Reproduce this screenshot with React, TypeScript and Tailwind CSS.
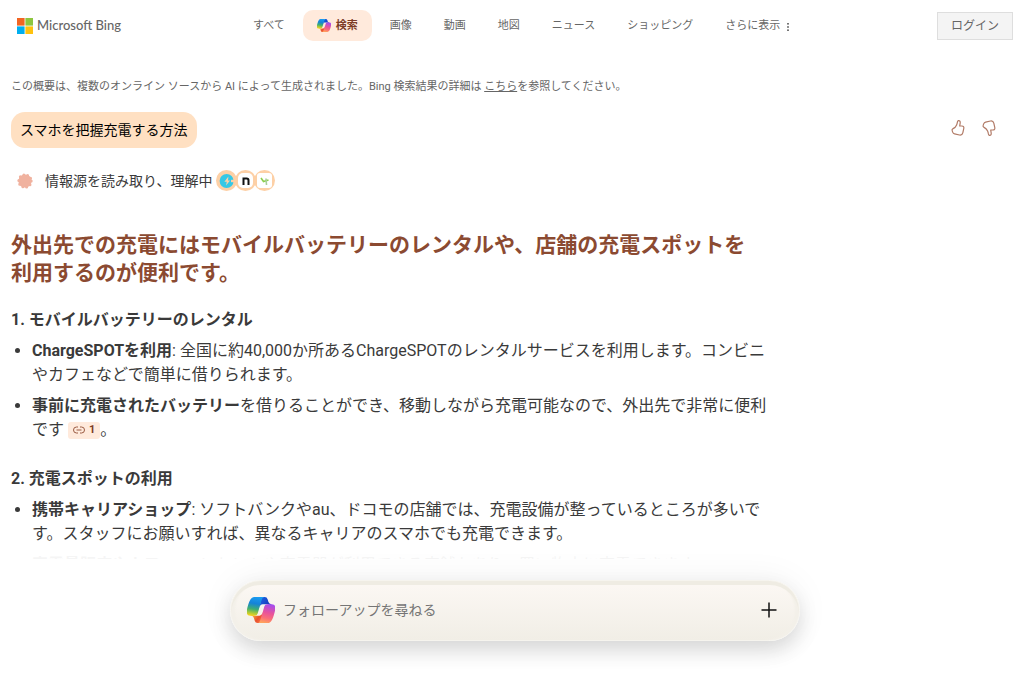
import { useId } from 'react';

const tabs = ['画像', '動画', '地図', 'ニュース', 'ショッピング'];

function MicrosoftLogo() {
    return (
        <svg viewBox="0 0 16 16" className="size-4" aria-hidden="true">
            <rect width="7.6" height="7.6" fill="#f26522" />
            <rect x="8.4" width="7.6" height="7.6" fill="#8dc63f" />
            <rect y="8.4" width="7.6" height="7.6" fill="#00aeef" />
            <rect x="8.4" y="8.4" width="7.6" height="7.6" fill="#ffc20e" />
        </svg>
    );
}

function CopilotLogo({ className }: { className: string }) {
    const id = useId();

    return (
        <svg viewBox="3 4 42 40" className={className} aria-hidden="true">
            <defs>
                <linearGradient id={`${id}a`} x1="24" y1="6" x2="38" y2="15" gradientUnits="userSpaceOnUse">
                    <stop offset="0" stopColor="#1b5fe0" />
                    <stop offset="1" stopColor="#1738b8" />
                </linearGradient>
                <linearGradient id={`${id}b`} x1="11" y1="33" x2="25" y2="44" gradientUnits="userSpaceOnUse">
                    <stop offset="0" stopColor="#f5a33b" />
                    <stop offset="0.5" stopColor="#e8502c" />
                    <stop offset="1" stopColor="#fb7a4d" />
                </linearGradient>
                <linearGradient id={`${id}c`} x1="17" y1="4" x2="12" y2="33" gradientUnits="userSpaceOnUse">
                    <stop offset="0" stopColor="#1a9cf0" />
                    <stop offset="0.35" stopColor="#1583d8" />
                    <stop offset="0.65" stopColor="#3fae72" />
                    <stop offset="0.85" stopColor="#a8c83a" />
                    <stop offset="1" stopColor="#f5d31c" />
                </linearGradient>
                <linearGradient id={`${id}d`} x1="37" y1="15" x2="30" y2="44" gradientUnits="userSpaceOnUse">
                    <stop offset="0" stopColor="#a44cf0" />
                    <stop offset="0.45" stopColor="#e8539c" />
                    <stop offset="0.75" stopColor="#fb6f78" />
                    <stop offset="1" stopColor="#ffa35c" />
                </linearGradient>
            </defs>
            <path
                fill={`url(#${id}a)`}
                d="M34.142 7.325A4.63 4.63 0 0 0 29.7 4H28.35a4.63 4.63 0 0 0-4.554 3.794L21.48 20.407l.575-1.965a4.63 4.63 0 0 1 4.444-3.33h7.853l3.294 1.282 3.175-1.283h-.926a4.63 4.63 0 0 1-4.444-3.325l-1.309-4.461Z"
            />
            <path
                fill={`url(#${id}b)`}
                d="M14.33 40.656A4.63 4.63 0 0 0 18.779 44h2.87a4.63 4.63 0 0 0 4.629-4.51l.312-12.163-.654 2.233a4.63 4.63 0 0 1-4.443 3.329h-7.919l-2.823-1.531-3.057 1.53h.912a4.63 4.63 0 0 1 4.447 3.344l1.279 4.424Z"
            />
            <path
                fill={`url(#${id}c)`}
                d="M29.5 4H13.46c-4.583 0-7.332 6.057-9.165 12.113-2.17 7.176-5.012 16.775 3.208 16.775h6.925a4.63 4.63 0 0 0 4.456-3.358 2077.6 2077.6 0 0 1 4.971-17.156c.843-2.843 1.544-5.284 2.621-6.805C27.08 4.717 28.086 4 29.5 4Z"
            />
            <path
                fill={`url(#${id}d)`}
                d="M18.498 44h16.04c4.582 0 7.332-6.058 9.165-12.115 2.17-7.177 5.013-16.775-3.207-16.775h-6.926a4.63 4.63 0 0 0-4.456 3.358 2084 2084 0 0 1-4.972 17.16c-.842 2.841-1.544 5.285-2.62 6.805-.604.852-1.61 1.567-3.024 1.567Z"
            />
        </svg>
    );
}

function ThumbIcon({ className = '' }: { className?: string }) {
    return (
        <svg
            viewBox="0 0 16 18"
            className={`h-[18px] w-4 ${className}`}
            fill="none"
            stroke="#b17a66"
            strokeWidth="1.2"
            strokeLinejoin="round"
            strokeLinecap="round"
            aria-hidden="true"
        >
            <path d="M8.4 1.6c1.3-.3 2 .9 1.8 2.3l-.5 3.1h2.3c1.3 0 2.1 1 1.8 2.3l-1 4.5c-.4 1.6-1.7 2.5-3.3 2.2l-4.9-1.1c-.9-.2-1.5-.7-1.8-1.5l-.6-1.5c-.4-1 0-1.8.9-2.3 1.9-1 2.8-2 3.5-3.7.4-1 .7-1.8.8-2.8.1-.8.4-1.3 1-1.5Z" />
        </svg>
    );
}

function Header() {
    return (
        <header className="flex items-start pt-[10px] pr-[11px] pl-[17px] text-[11px] text-[#666]">
            <a href="#" className="flex h-8 w-[236px] items-center gap-1">
                <MicrosoftLogo />
                <span className="font-['Lato',sans-serif] text-[13px] font-medium text-[#666]">
                    Microsoft Bing
                </span>
            </a>
            <nav className="flex items-center gap-[33px] whitespace-nowrap">
                <a href="#" className="pt-[2px]">
                    すべて
                </a>
                <a
                    href="#"
                    aria-current="page"
                    className="-mx-[15px] flex h-[31px] w-[69px] items-center justify-center gap-[5px] rounded-[10px] bg-[#ffeadc] font-bold text-[#7b3d27]"
                >
                    <CopilotLogo className="h-[13px] w-[14px]" />
                    <span className="pt-[2px]">検索</span>
                </a>
                {tabs.map((tab) => (
                    <a key={tab} href="#" className="-mr-px pt-[2px]">
                        {tab}
                    </a>
                ))}
                <button type="button" className="flex items-center gap-[6px] pt-[2px]">
                    さらに表示
                    <svg viewBox="0 0 4 10" className="h-2 w-1" fill="#555" aria-hidden="true">
                        <rect x="1" y="0" width="2" height="2" />
                        <rect x="1" y="4" width="2" height="2" />
                        <rect x="1" y="8" width="2" height="2" />
                    </svg>
                </button>
            </nav>
            <button
                type="button"
                className="mt-[2px] ml-auto h-7 border border-[#dedede] bg-[#f4f4f4] px-[13px] text-[12px]"
            >
                ログイン
            </button>
        </header>
    );
}

function Sources() {
    const ring =
        'flex size-[21px] items-center justify-center rounded-full bg-[#fdd0a6] -ml-[2px]';

    return (
        <div className="ml-[6px] flex" aria-hidden="true">
            <span className={ring}>
                <svg viewBox="0 0 16 16" className="size-4">
                    <circle cx="7.6" cy="8" r="7" fill="#35c8e6" />
                    <path d="M9.4 3.6 5.4 8.8h2.4L7 12.6l4-5H9l.4-4Z" fill="#fdd0a6" />
                    <path d="M12 8h4" stroke="#fdd0a6" strokeWidth="2.4" />
                </svg>
            </span>
            <span className={ring}>
                <span className="flex size-[15px] items-center justify-center rounded-[5px] bg-white">
                    <svg viewBox="0 0 8 8" className="size-2" fill="none" stroke="#111" strokeWidth="2">
                        <path d="M1.5 8V1.6h3.2c1.2 0 1.8.6 1.8 1.8V8" />
                    </svg>
                </span>
            </span>
            <span className={ring}>
                <span className="flex size-[15px] items-center justify-center rounded-[3px] bg-white">
                    <svg viewBox="0 0 10 10" className="size-[10px]" fill="none" strokeWidth="1.6">
                        <path d="m1 2 2.5 3.5L8.5 4" stroke="#8ccf4d" />
                        <path d="M6 2.5 6.5 9" stroke="#a7cf9b" />
                    </svg>
                </span>
            </span>
        </div>
    );
}

function Answer() {
    return (
        <article className="max-w-[760px] text-base leading-6 text-[#3a3a3a]">
            <h1 className="mt-10 max-w-[750px] text-[21px] leading-7 font-bold text-[#8b4a31]">
                外出先での充電にはモバイルバッテリーのレンタルや、店舗の充電スポットを利用するのが便利です。
            </h1>
            <h2 className="mt-[21px] font-bold">1. モバイルバッテリーのレンタル</h2>
            <ul className="mt-[7px] max-w-[761px] list-disc space-y-[7px] pl-[21px]">
                <li>
                    <strong>ChargeSPOTを利用</strong>:
                    全国に約40,000か所あるChargeSPOTのレンタルサービスを利用します。コンビニやカフェなどで簡単に借りられます。
                </li>
                <li>
                    <strong>事前に充電されたバッテリー</strong>
                    を借りることができ、移動しながら充電可能なので、外出先で非常に便利です{' '}
                    <a
                        href="#"
                        className="inline-flex h-[17px] items-center gap-1 rounded-[3px] bg-[#ffeadc] px-[5px] align-[1px] text-[11px] font-bold text-[#7b3d27]"
                    >
                        <svg viewBox="0 0 12 8" className="h-2 w-3" fill="none" stroke="#9a5a42" aria-hidden="true">
                            <path d="M5 1H3.5a3 3 0 0 0 0 6H5M7 1h1.5a3 3 0 0 1 0 6H7M3.5 4h5" />
                        </svg>
                        1
                    </a>
                    。
                </li>
            </ul>
            <h2 className="mt-[25px] font-bold">2. 充電スポットの利用</h2>
            <ul className="mt-[7px] max-w-[761px] list-disc space-y-[7px] pl-[21px]">
                <li>
                    <strong>携帯キャリアショップ</strong>:
                    ソフトバンクやau、ドコモの店舗では、充電設備が整っているところが多いです。スタッフにお願いすれば、異なるキャリアのスマホでも充電できます。
                </li>
                <li className="truncate">
                    <strong>家電量販店やカフェ</strong>:
                    コンセントや充電器が利用できる店舗もあり、買い物中に充電できます。
                </li>
            </ul>
        </article>
    );
}

export default function App() {
    return (
        <div
            lang="ja"
            className="flex h-screen flex-col overflow-hidden bg-white font-['Roboto','Noto_Sans_CJK_JP',sans-serif]"
        >
            <Header />
            <main className="relative min-h-0 flex-1 overflow-hidden px-[11px] pt-9">
                <p className="text-[11px] leading-[18px] text-[#666]">
                    この概要は、複数のオンライン ソースから AI によって生成されました。Bing 検索結果の詳細は{' '}
                    <a href="#" className="underline">
                        こちら
                    </a>
                    を参照してください。
                </p>
                <div className="mt-4 flex items-start justify-between">
                    <p className="flex h-9 items-center rounded-[14px] bg-[#ffe0c2] px-[9px] text-sm text-black">
                        スマホを把握充電する方法
                    </p>
                    <div className="mt-[7px] mr-4 flex gap-[15px]">
                        <button type="button" aria-label="いいね">
                            <ThumbIcon />
                        </button>
                        <button type="button" aria-label="よくないね">
                            <ThumbIcon className="-scale-y-100" />
                        </button>
                    </div>
                </div>
                <div className="mt-[22px] flex h-[21px] items-center pl-[6px] text-sm text-[#3a3a3a]">
                    <svg viewBox="0 0 16 16" className="mr-3 size-4" aria-hidden="true">
                        <circle cx="8" cy="8" r="6.6" fill="#f0b29f" />
                        <circle
                            cx="8"
                            cy="8"
                            r="6.2"
                            fill="none"
                            stroke="#f0b29f"
                            strokeWidth="3"
                            strokeLinecap="round"
                            strokeDasharray="0 3.9"
                        />
                    </svg>
                    情報源を読み取り、理解中
                    <Sources />
                </div>
                <Answer />
                <div className="pointer-events-none absolute inset-x-0 bottom-0 h-5 bg-linear-to-b from-white/0 to-white/95 to-60%" />
            </main>
            <footer className="relative flex justify-center pt-[21px] pr-4 pb-[33px] pl-[22px]">
                <form className="flex h-[61px] w-full max-w-[570px] items-center gap-2 rounded-[31px] border border-[#f6f4ee] bg-linear-to-b from-[#fcf8f4] to-[#f1eee6] pr-5 pb-[2px] pl-4 shadow-[inset_0_4px_0_#efece3,inset_4px_0_2px_#f3f0e9,inset_-4px_0_2px_#f3f0e9,0_10px_20px_rgba(0,0,0,0.13),0_0_36px_rgba(0,0,0,0.06)]">
                    <CopilotLogo className="h-[26px] w-7" />
                    <input
                        type="text"
                        aria-label="フォローアップを尋ねる"
                        placeholder="フォローアップを尋ねる"
                        className="min-w-0 flex-1 bg-transparent text-sm outline-none placeholder:text-[#757575]"
                    />
                    <button type="button" aria-label="追加" className="p-[2px]">
                        <svg viewBox="0 0 16 16" className="size-4" stroke="#111" strokeWidth="1.5" aria-hidden="true">
                            <path d="M8 0.5v15M0.5 8h15" />
                        </svg>
                    </button>
                </form>
            </footer>
        </div>
    );
}
